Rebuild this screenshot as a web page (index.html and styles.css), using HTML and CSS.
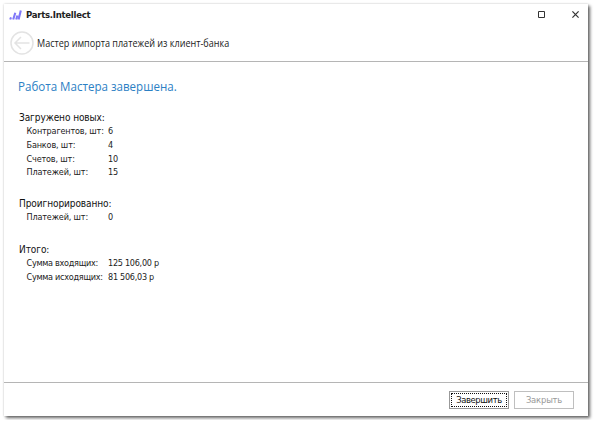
FILE: index.html
```html
<!DOCTYPE html>
<html lang="ru">
<head>
<meta charset="utf-8">
<title>Parts.Intellect</title>
<link rel="stylesheet" href="styles.css">
</head>
<body>
<div class="window">
  <header class="titlebar">
    <svg class="logo" width="13" height="12" viewBox="0 0 13 12"><g fill="none" stroke="#8078f8" stroke-width="2.1"><path d="M1.2 10.5 2 8.3M4.2 10.5 6.3 3.8M7.2 10.5 8.4 6.5M9.6 10.5 11.8 1.5"/></g></svg>
    <span class="app-name">Parts.Intellect</span>
    <svg class="maximize" width="7" height="7" viewBox="0 0 7 7"><path d="M.5.5h6v6h-6z" fill="none" stroke="#333"/></svg>
    <svg class="close" width="7" height="7" viewBox="0 0 7 7"><path d="M.4.4 6.6 6.6M6.6.4.4 6.6" stroke="#333" stroke-width="1.2"/></svg>
  </header>
  <div class="wizard-title">
    <svg class="back" width="24" height="24" viewBox="0 0 24 24"><g fill="none" stroke="#e3e3e3" stroke-width="1.5"><circle cx="12" cy="12" r="11"/><path d="M19.5 12H5M11 6l-6 6 6 6"/></g></svg>
    <span class="subtitle">Мастер импорта платежей из клиент-банка</span>
  </div>
  <main class="content">
    <h1 class="heading">Работа Мастера завершена.</h1>
    <section class="group group-new">
      <h2>Загружено новых:</h2>
      <dl>
        <dt>Контрагентов, шт:</dt><dd>6</dd>
        <dt>Банков, шт:</dt><dd>4</dd>
        <dt>Счетов, шт:</dt><dd>10</dd>
        <dt>Платежей, шт:</dt><dd>15</dd>
      </dl>
    </section>
    <section class="group">
      <h2>Проигнорированно:</h2>
      <dl><dt>Платежей, шт:</dt><dd>0</dd></dl>
    </section>
    <section class="group">
      <h2>Итого:</h2>
      <dl class="totals">
        <dt>Сумма входящих:</dt><dd>125 106,00 р</dd>
        <dt>Сумма исходящих:</dt><dd>81 506,03 р</dd>
      </dl>
    </section>
  </main>
  <footer class="footer">
    <button class="btn btn-primary">Завершить</button>
    <button class="btn" disabled>Закрыть</button>
  </footer>
</div>
</body>
</html>
```
FILE: styles.css
```css
* { box-sizing: border-box; }
body { margin: 0; background: #fff; color: #222; font-family: "DejaVu Sans Condensed", "DejaVu Sans", sans-serif; font-size: 9px; }
.window { width: 584px; height: 412px; margin: 4px; display: flex; flex-direction: column; background: #fff; box-shadow: 2px 2px 3px rgba(0,0,0,.6), 0 0 2px rgba(0,0,0,.18); }
.titlebar { height: 21px; display: flex; align-items: center; padding: 0 9px 0 5px; }
.logo { margin-right: 4px; }
.app-name { font-weight: bold; font-size: 9.5px; letter-spacing: -.27px; }
.maximize { margin-left: auto; }
.close { margin-left: 27px; }
.wizard-title { height: 37px; display: flex; align-items: center; padding-left: 6px; border-bottom: 1px solid #b5b5b5; }
.back { margin-right: 3px; }
.subtitle { font: 10.2px "Open Sans", sans-serif; white-space: nowrap; transform: scaleX(.888); transform-origin: left; }
.content { flex: 1; padding: 16px 14px 0; white-space: nowrap; }
.heading { margin: 0; height: 22px; font: 13px/16px "Open Sans", sans-serif; color: #2c80c4; transform: scaleX(.89); transform-origin: left; }
.group { padding-left: 1px; margin-bottom: 17.6px; }
.group-new { margin-top: 11px; margin-bottom: 17.3px; }
h2 { margin: 0; font-size: 10px; font-weight: normal; line-height: 14px; letter-spacing: -.08px; color: #111; }
dl { margin: 0; padding-left: 7.5px; display: grid; grid-template-columns: 81.5px auto; grid-auto-rows: 13.6px; line-height: 13.6px; letter-spacing: -.15px; padding-top: .4px; }
.totals { letter-spacing: -.27px; }
dd { margin: 0; }
.footer { height: 34px; border-top: 1px solid #b5b5b5; display: flex; justify-content: flex-end; align-items: center; gap: 5px; padding: 1px 14px 0 0; }
.btn { width: 60px; height: 18px; padding: 0; border: 1px solid #bfbfbf; background: #fff; color: #999; font: 9.4px/14px "DejaVu Sans Condensed", sans-serif; letter-spacing: -.4px; }
.btn:disabled { letter-spacing: -.2px; }
.btn-primary { border-color: #999; color: #111; outline: 1px dotted #111; outline-offset: -3px; }
```
